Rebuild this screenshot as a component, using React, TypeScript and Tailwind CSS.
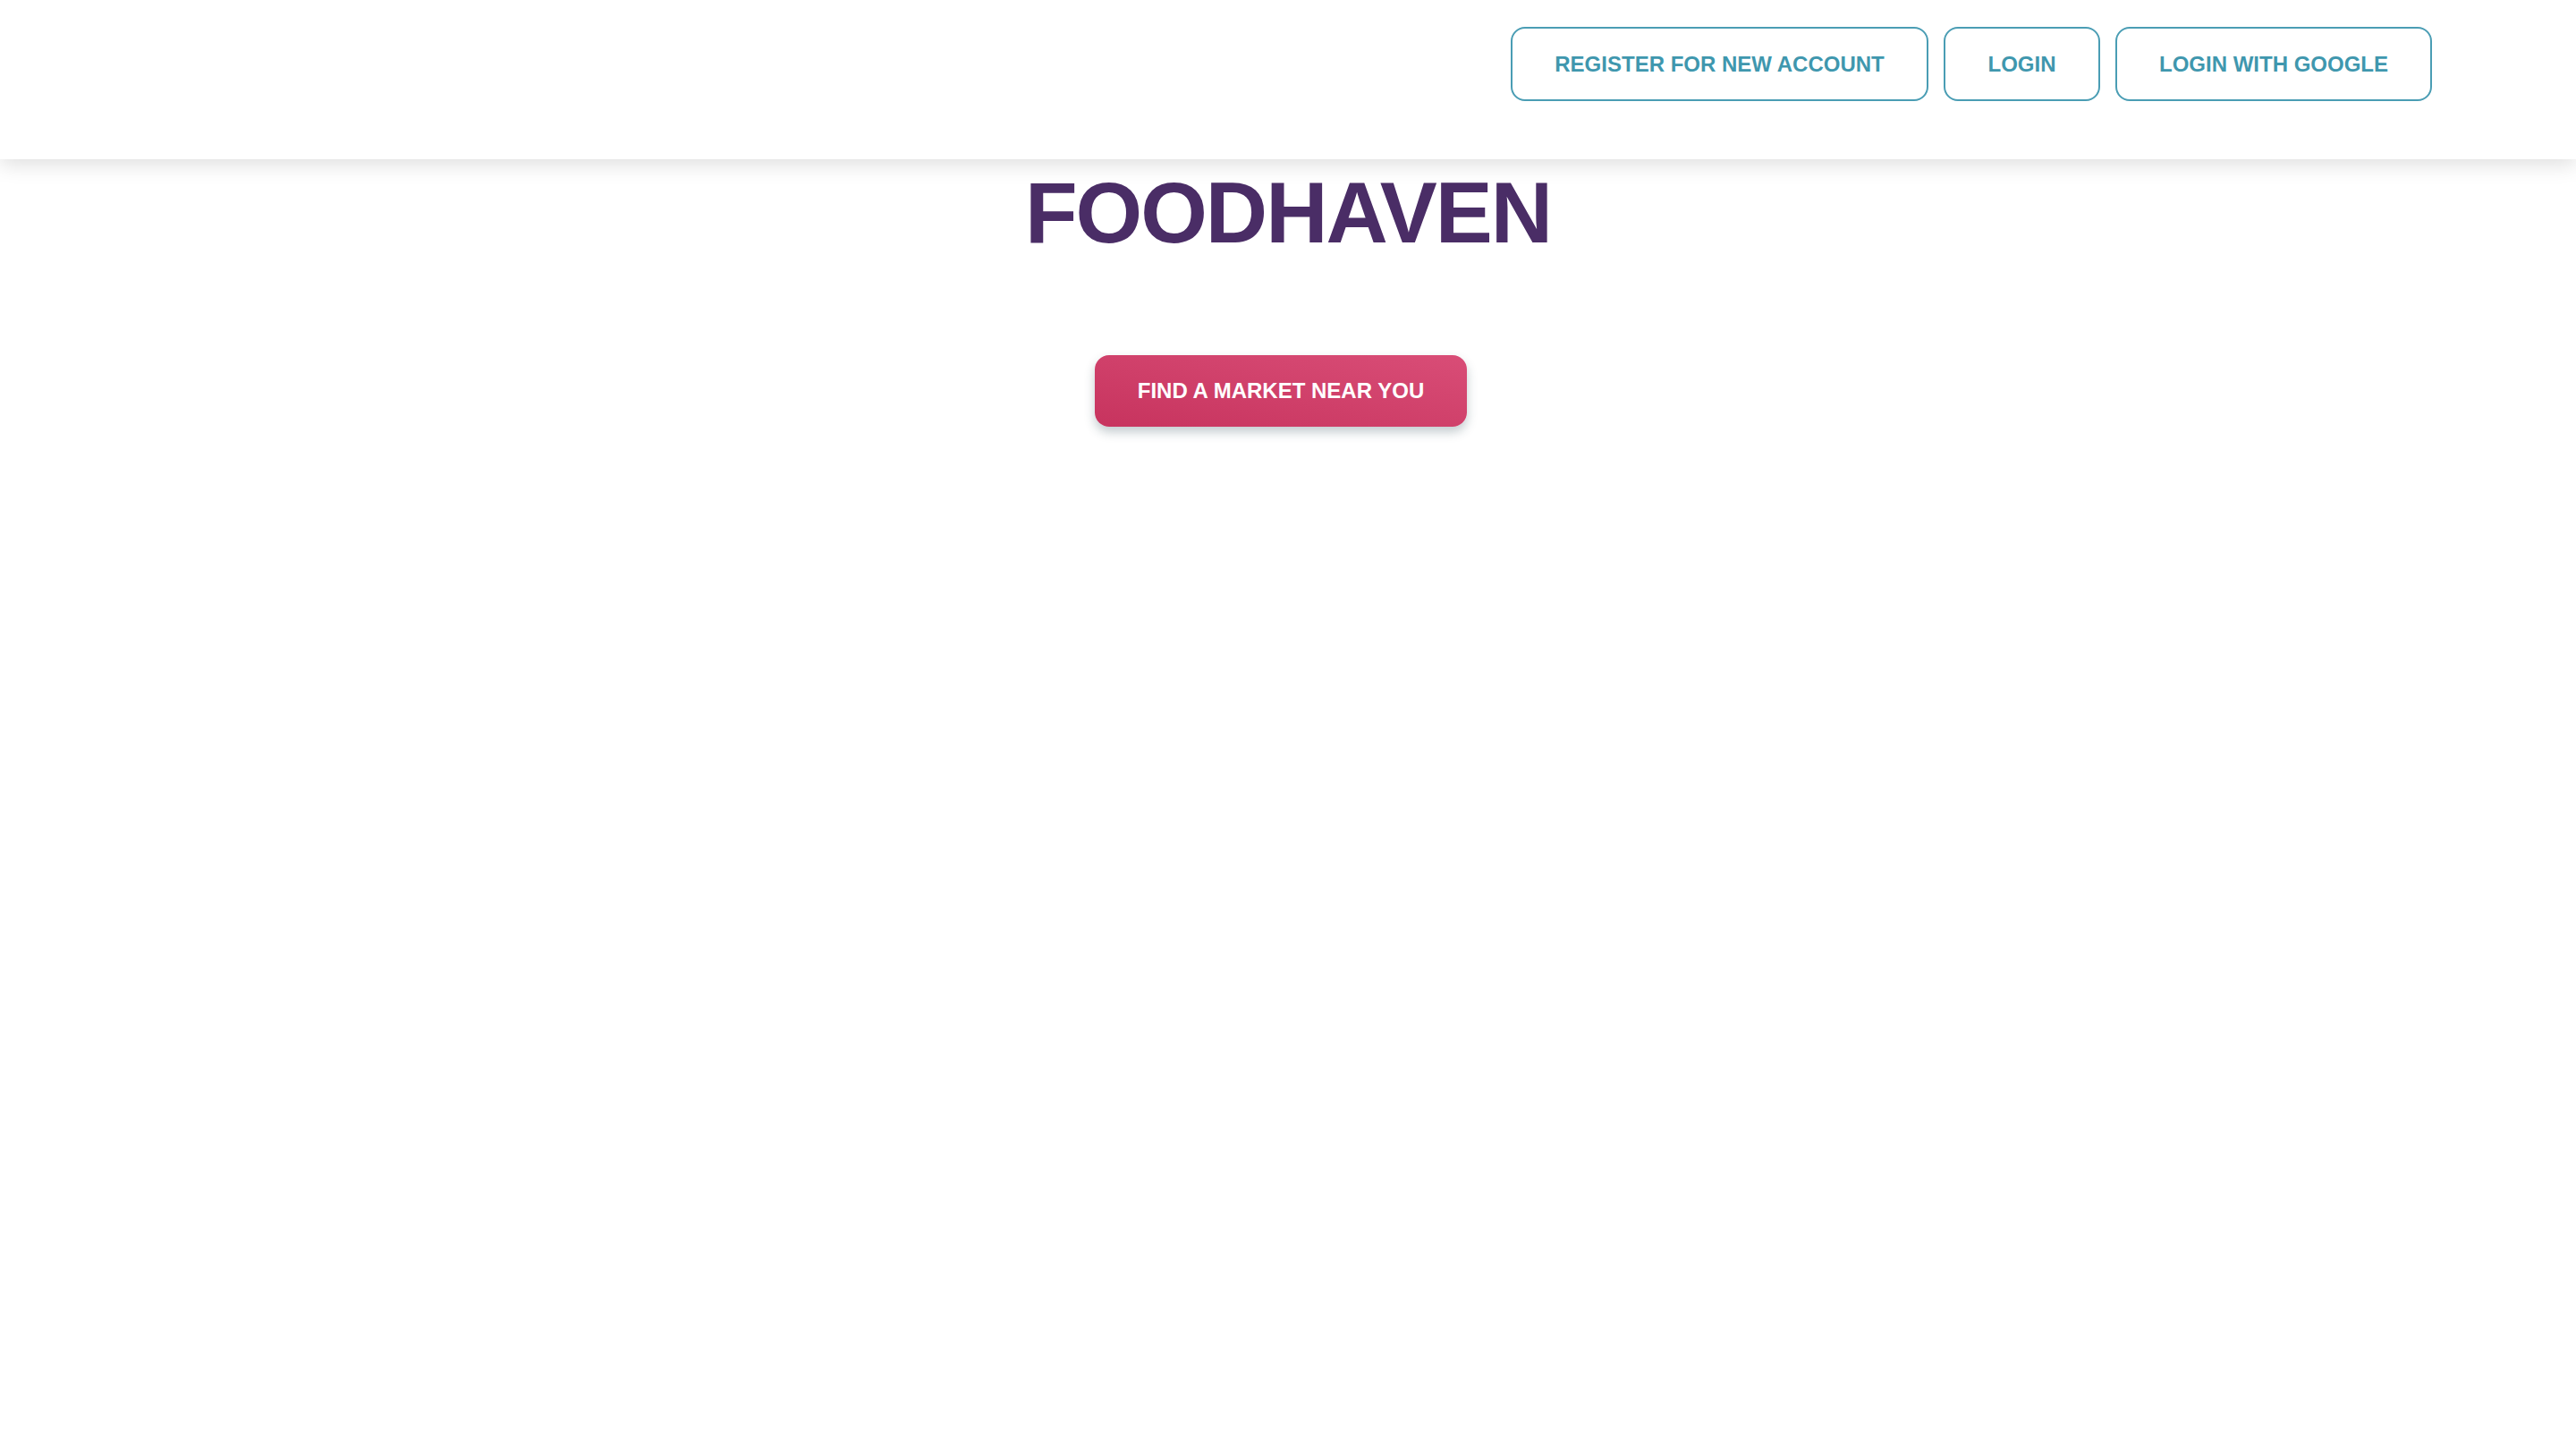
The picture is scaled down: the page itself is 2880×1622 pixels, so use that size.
import React from "react";

export default function App() {
  const font = { fontFamily: '"Liberation Sans", Arial, Helvetica, sans-serif' };
  const navBtn =
    "h-[83px] px-[48px] flex items-center justify-center rounded-[16px] border-2 border-[#4a9db4] bg-white text-[#3f97ae] text-[24px] font-bold leading-none whitespace-nowrap";
  return (
    <div className="min-h-[1622px] w-full bg-white" style={font}>
      <header className="relative z-10 h-[178px] w-full bg-white shadow-[0_6px_22px_rgba(0,0,0,0.13)] flex items-start justify-end pt-[30px] pr-[161px] gap-[17px]">
        <button className={navBtn + " w-[467px]"}>REGISTER FOR NEW ACCOUNT</button>
        <button className={navBtn + " w-[175px]"}>LOGIN</button>
        <button className={navBtn + " w-[354px]"}>LOGIN WITH GOOGLE</button>
      </header>
      <main className="flex flex-col items-center">
        <h1 className="mt-[12px] text-[96px] leading-none font-bold tracking-[-2px] text-[#4a2d66]">
          FOODHAVEN
        </h1>
        <div className="w-full flex justify-center pr-[16px] mt-[111px]">
          <button className="w-[416px] h-[80px] flex items-center justify-center rounded-[16px] bg-gradient-to-tr from-[#c7335e] to-[#d94d77] text-white text-[24px] font-bold leading-none whitespace-nowrap shadow-[0_6px_12px_rgba(40,70,80,0.28)]">
            FIND A MARKET NEAR YOU
          </button>
        </div>
      </main>
    </div>
  );
}
